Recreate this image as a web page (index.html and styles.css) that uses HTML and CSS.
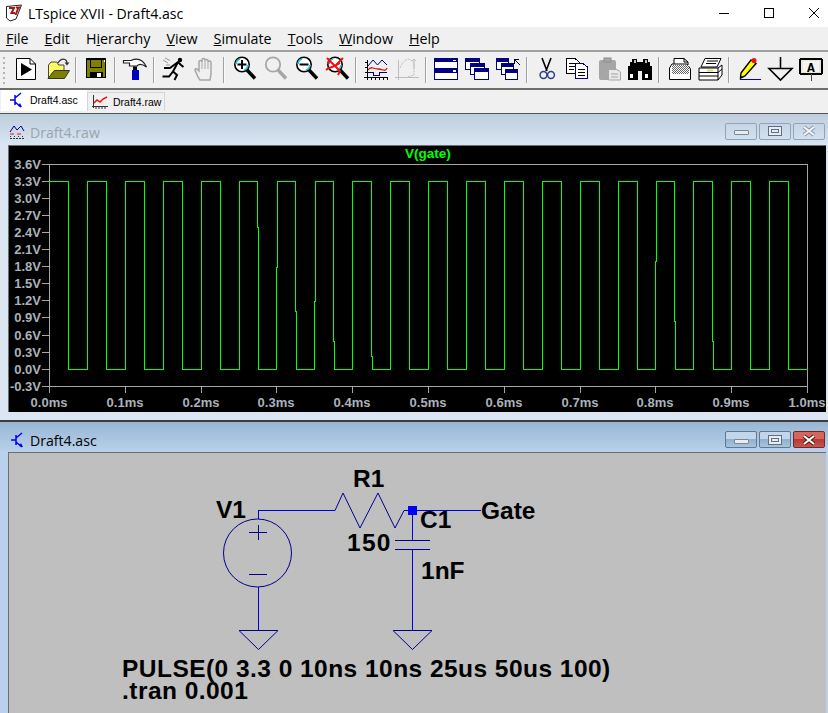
FILE: index.html
```html
<!DOCTYPE html>
<html lang="en">
<head>
<meta charset="utf-8">
<title>LTspice XVII - Draft4.asc</title>
<link rel="stylesheet" href="styles.css">
</head>
<body>
<div class="app">
  <header class="titlebar">
    <svg class="logo" width="18" height="18" viewBox="0 0 18 18"><path d="M1.5 2.5 L16.5 1 L11 15 L5 17 L1.5 14Z" fill="#fff" stroke="#222"/><path d="M4 4 H9 L6.5 9 H10 M11 3.5 H16 M13.5 3.5 L10.5 11" fill="none" stroke="#a01818" stroke-width="2"/></svg>
    <span class="app-title">LTspice XVII - Draft4.asc</span>
    <div class="caption">
      <svg width="12" height="12" viewBox="0 0 12 12"><path d="M1 6.5H11" stroke="#000"/></svg>
      <svg width="12" height="12" viewBox="0 0 12 12"><rect x="1.5" y="1.5" width="9" height="9" fill="none" stroke="#000"/></svg>
      <svg width="12" height="12" viewBox="0 0 12 12"><path d="M1 1L11 11M11 1L1 11" stroke="#000" fill="none"/></svg>
    </div>
  </header>
  <nav class="menubar">
    <span><u>F</u>ile</span><span><u>E</u>dit</span><span>H<u>i</u>erarchy</span><span><u>V</u>iew</span><span><u>S</u>imulate</span><span><u>T</u>ools</span><span><u>W</u>indow</span><span><u>H</u>elp</span>
  </nav>
  <div class="toolbar">
    <div class="grip"></div>
    <div class="group">
      <svg class="ic" viewBox="0 0 24 24"><path d="M2.5 1.5H16L21.5 7V22.5H2.5Z" fill="#fff" stroke="#000"/><path d="M16 1.5V7H21.5" fill="none" stroke="#000"/><path d="M7 6V19L18 12.5Z" fill="#000"/></svg>
      <svg class="ic" viewBox="0 0 24 24"><defs><pattern id="dith" width="2" height="2" patternUnits="userSpaceOnUse"><rect width="2" height="2" fill="#ffff00"/><rect width="1" height="1" fill="#ffffc0"/><rect x="1" y="1" width="1" height="1" fill="#ffffc0"/></pattern></defs><path d="M3.5 21V8L6 5H12L13.5 8H19V14H9Z" fill="url(#dith)" stroke="#444"/><path d="M3 21.5L9.500 13.500H24.5L19.5 21.5Z" fill="#808000" stroke="#333"/><path d="M13 6Q16 1 20 2.5Q22 3.5 22 6" fill="none" stroke="#333" stroke-width="1.3"/><path d="M19.5 5.5H24.5L22 8.5Z" fill="#333"/></svg>
    </div>
    <div class="sep"></div>
    <div class="group">
      <svg class="ic crisp" viewBox="0 0 24 24"><rect x="2.5" y="1.5" width="19" height="19" fill="#808000" stroke="#000"/><rect x="3" y="2" width="18" height="1" fill="#000"/><rect x="6.5" y="2.5" width="11" height="8" fill="#808000" stroke="#000"/><rect x="20" y="3" width="1" height="2" fill="#fff"/><rect x="6" y="15" width="13" height="6" fill="#000"/><rect x="13" y="16" width="4" height="4" fill="#fff"/></svg>
    </div>
    <div class="sep"></div>
    <div class="group">
      <svg class="ic" viewBox="0 0 24 24"><path d="M0.5 3.500H8Q18 -1 23.500 10Q17 5.500 14 9H6.500V6H0.500Z" fill="#fff" stroke="#222" stroke-width="1.200"/><rect x="10" y="9.500" width="4" height="4" fill="#000"/><rect x="9" y="13" width="7" height="10" fill="#0000c0"/></svg>
    </div>
    <div class="sep"></div>
    <div class="group">
      <svg class="ic" viewBox="0 0 24 24"><path d="M1 3L6 6M3 1L8 3.5M4 8L8 8" stroke="#999" fill="none"/><circle cx="18" cy="3" r="2.2" fill="#000"/><path d="M2 11H8L16 5L19 8L21.5 10M15.5 6L11 14.5L15 18L12.5 23M11 14.5L7 19.5H0.5" fill="none" stroke="#000" stroke-width="2"/></svg>
      <svg class="ic" viewBox="0 0 24 24"><path d="M5 20L2 13Q2 11 4 12L6 14V5Q6 3.5 7.500 3.500Q9 3.500 9 5V3Q9 1.500 10.500 1.500Q12 1.500 12 3V3.500Q12 2.500 13.500 2.500Q15 2.500 15 4V5Q15 4 16.500 4Q18 4 18 5.500V17L17 23H7Z" fill="#f0f0f0" stroke="#a6a6a6" stroke-width="1.5"/><path d="M9 5V12M12 3V12M15 5V12" stroke="#a6a6a6" fill="none"/></svg>
    </div>
    <div class="sep"></div>
    <div class="group">
      <svg class="ic" viewBox="0 0 24 24"><path d="M15 13L23 21.500" stroke="#000" stroke-width="3.400"/><circle cx="10" cy="7.500" r="7.200" fill="#fff" stroke="#000" stroke-width="1.600"/><path d="M4 7Q4.500 3 8 2M16 8Q15.500 12 12 13" fill="none" stroke="#20c8d8" stroke-width="1.800"/><path d="M10 3V12M5.500 7.500H14.500" stroke="#000" stroke-width="2"/></svg>
      <svg class="ic" viewBox="0 0 24 24"><path d="M15 13L23 21.500" stroke="#a6a6a6" stroke-width="3.400"/><circle cx="10" cy="7.500" r="7.200" fill="#f0f0f0" stroke="#a6a6a6" stroke-width="1.800"/></svg>
      <svg class="ic" viewBox="0 0 24 24"><path d="M15 13L23 21.500" stroke="#000" stroke-width="3.400"/><circle cx="10" cy="7.500" r="7.200" fill="#fff" stroke="#000" stroke-width="1.600"/><path d="M4 7Q4.500 3 8 2M16 8Q15.500 12 12 13" fill="none" stroke="#20c8d8" stroke-width="1.800"/><path d="M5.500 7.500H14.500" stroke="#000" stroke-width="2"/></svg>
      <svg class="ic" viewBox="0 0 24 24"><path d="M15 13L23 21.500" stroke="#000" stroke-width="3.400"/><circle cx="10" cy="7.500" r="7.200" fill="#fff" stroke="#000" stroke-width="1.600"/><path d="M4 7Q4.500 3 8 2M16 8Q15.500 12 12 13" fill="none" stroke="#20c8d8" stroke-width="1.800"/><path d="M2 1L15 14L13 18M18 1L10 9L4 11L1 13M4 3L3 7M10 9L15 6" fill="none" stroke="#f01010" stroke-width="2"/></svg>
    </div>
    <div class="sep"></div>
    <div class="group">
      <svg class="ic crisp" viewBox="0 0 24 24"><path d="M3.500 3V23M0 20.500H24M7 21V23M11 21V23M15 21V23M19 21V23M23 21V23M1 5.500H3M1 10.500H3M1 15.500H3" stroke="#000" fill="none"/><g class="soft"><path d="M4 9L9 3L13.500 8L18 3L23 8" stroke="#000080" fill="none"/><path d="M4 13Q6 10 9 11T14 12T19 13T23 11" stroke="#e01010" fill="none" stroke-width="1.300"/></g><path d="M4 15.500H9V18.500H15V15.500H23" stroke="#000080" fill="none"/></svg>
      <svg class="ic" viewBox="0 0 24 24"><path d="M3.500 3V23M0 20.500H24" stroke="#bdbdbd" fill="none"/><path d="M5 11Q8 3 14 2L19 6V18L13 20" stroke="#bdbdbd" stroke-dasharray="2 1" fill="none"/><path d="M19 2V12M17 4L19 2L21 4" stroke="#bdbdbd" fill="none"/></svg>
    </div>
    <div class="sep"></div>
    <div class="group">
      <svg class="ic crisp" viewBox="0 0 24 24"><rect x="0.500" y="1.500" width="23" height="10" fill="#fff" stroke="#000080"/><rect x="1" y="2" width="22" height="3" fill="#000080"/><rect x="19" y="3" width="3" height="1" fill="#fff"/><rect x="0.500" y="12.500" width="23" height="10" fill="#fff" stroke="#000080"/><rect x="1" y="12" width="22" height="4" fill="#000080"/><rect x="19" y="13" width="3" height="2" fill="#fff"/></svg>
      <svg class="ic crisp" viewBox="0 0 24 24"><rect x="0.500" y="1.500" width="14" height="11" fill="#fff" stroke="#000080"/><rect x="1" y="2" width="13" height="3" fill="#000080"/><rect x="5.500" y="6.500" width="14" height="11" fill="#fff" stroke="#000080"/><rect x="6" y="7" width="13" height="3" fill="#000080"/><rect x="9.500" y="11.500" width="14" height="11" fill="#fff" stroke="#000080"/><rect x="10" y="12" width="13" height="3" fill="#000080"/></svg>
      <svg class="ic crisp" viewBox="0 0 24 24"><rect x="0.500" y="1.500" width="12" height="11" fill="#fff" stroke="#000080"/><rect x="1" y="2" width="11" height="3" fill="#000080"/><rect x="5.500" y="6.500" width="12" height="11" fill="#fff" stroke="#000080"/><rect x="6" y="7" width="11" height="3" fill="#000080"/><rect x="9.500" y="12.500" width="12" height="10" fill="#fff" stroke="#000080"/><rect x="10" y="13" width="11" height="3" fill="#000080"/><path d="M19 2.500H23M18.500 2V7M19 3L24 8" stroke="#000" fill="none"/></svg>
    </div>
    <div class="sep"></div>
    <div class="group">
      <svg class="ic" viewBox="0 0 24 24"><path d="M7 1L12 14M16 1L11 14" stroke="#000" stroke-width="1.600" fill="none"/><circle cx="8.500" cy="18" r="3.400" fill="none" stroke="#2c3e90" stroke-width="1.500"/><circle cx="16" cy="18" r="3.400" fill="none" stroke="#2c3e90" stroke-width="1.500"/></svg>
      <svg class="ic crisp" viewBox="0 0 24 24"><path d="M0.500 1.500H9L13 5V16H0.500Z" fill="#fff" stroke="#000"/><path d="M3 6H9M3 9H10M3 12H8" stroke="#000"/><path d="M9.500 6.500H17L21.500 10V21.500H9.500Z" fill="#fff" stroke="#000080"/><path d="M12 12H19M12 15H19M12 18H19" stroke="#000"/></svg>
      <svg class="ic" viewBox="0 0 24 24"><rect x="2" y="3" width="17" height="20" rx="2" fill="#a6a6a6"/><rect x="7" y="1" width="7" height="4" fill="#a6a6a6" stroke="#8c8c8c"/><path d="M11.500 12.500H20L23.500 15V23H11.500Z" fill="#e8e8e8" stroke="#a6a6a6"/><path d="M14 17H21M14 20H21" stroke="#a6a6a6"/></svg>
      <svg class="ic crisp" viewBox="0 0 24 24"><path d="M4 2H9V5H15V2H20V5H22V9H24V23H14V14H10V23H0V9H2V5H4Z" fill="#000"/><rect x="2" y="17" width="3" height="4" fill="#fff"/><rect x="17" y="17" width="3" height="4" fill="#fff"/><rect x="6" y="3" width="2" height="3" fill="#bbb"/><rect x="17" y="3" width="2" height="3" fill="#bbb"/></svg>
    </div>
    <div class="sep"></div>
    <div class="group">
      <svg class="ic" viewBox="0 0 24 24"><defs><pattern id="dith2" width="2" height="2" patternUnits="userSpaceOnUse"><rect width="2" height="2" fill="#fff"/><rect width="1" height="1" fill="#666"/><rect x="1" y="1" width="1" height="1" fill="#666"/></pattern></defs><path d="M7 1.500H17L21 5V9H7Z" fill="#fff" stroke="#000"/><path d="M5 7H20L23.500 12V22.500H2.500V11Z" fill="#fff" stroke="#000"/><rect x="5" y="8" width="17" height="9" fill="url(#dith2)"/><path d="M17 1.500V5H21" fill="none" stroke="#000"/></svg>
      <svg class="ic" viewBox="0 0 24 24"><path d="M7 1.500H23L19 10H3Z" fill="#fff" stroke="#000"/><path d="M9 4H20M8 6.500H18" stroke="#000"/><path d="M1 11H20L24 8V18L20 23H1Z" fill="#fff" stroke="#000"/><path d="M1 15.500H20M1 19H20M20 11V23M20 15.500L24 12" stroke="#000" fill="none"/><rect x="9" y="12.500" width="6" height="2" fill="#e4e060"/></svg>
    </div>
    <div class="sep"></div>
    <div class="group">
      <svg class="ic" viewBox="0 0 24 24"><path d="M4 16L14 3L19 6.500L8 19L3.500 21Z" fill="#ffff00" stroke="#000" stroke-width="1.400"/><circle cx="17" cy="3.500" r="2.500" fill="#f01010"/><path d="M3 19L3.500 21L6 20Z" fill="#000"/><path d="M3 22.500H24" stroke="#0000c0" stroke-width="1"/></svg>
      <svg class="ic" viewBox="0 0 24 24"><path d="M12.500 0V11M1 11.500H24L12.500 23Z" fill="none" stroke="#000" stroke-width="1.600"/></svg>
      <svg class="ic crisp" viewBox="0 0 24 24"><rect x="1" y="2" width="22" height="15" rx="2" fill="#e8e8d8" stroke="#000" stroke-width="2"/><rect x="4" y="4" width="16" height="11" fill="#f4f4f4"/><text x="12" y="14.500" class="glyph-a">A</text><path d="M12.500 17V24" stroke="#444"/></svg>
    </div>
  </div>
  <div class="tabs">
    <div class="tab active">
      <svg width="14" height="16" viewBox="0 0 14 16"><path d="M0 8H5M5 3V13M5 6L11 1M5 10L11 15" fill="none" stroke="#0000f0" stroke-width="1.500"/><path d="M12 15L8 14L10 11Z" fill="#0000f0"/></svg>
      <span>Draft4.asc</span>
    </div>
    <div class="tab">
      <svg width="16" height="16" viewBox="0 0 16 16"><path d="M1.500 1V14M0 12.500H16M4 13V15M7 13V15M10 13V15M13 13V15" stroke="#333" fill="none"/><path d="M2 9L5 6L8 8L11 5L15 3" stroke="#f01010" stroke-width="1.500" fill="none"/></svg>
      <span>Draft4.raw</span>
    </div>
  </div>
  <section class="win inactive">
    <div class="win-title first">
      <svg class="win-ic" width="16" height="16" viewBox="0 0 16 16"><path d="M1 8L5 2L8 6L12 2L15 7" fill="none" stroke="#000080"/><path d="M1 10H5M8 10H12" stroke="#f01010"/><path d="M1 14.500H15" stroke="#333" stroke-dasharray="2 1"/><path d="M1 12.500H15" stroke="#333" stroke-dasharray="1 3"/></svg>
      <span class="win-name">Draft4.raw</span>
      <div class="win-btns">
        <button class="wb"><i class="g-min"></i></button>
        <button class="wb"><i class="g-max"></i></button>
        <button class="wb"><svg width="16" height="12" viewBox="0 0 16 12"><path d="M3 2L13 10M13 2L3 10" stroke="#8a97a6" stroke-width="4"/><path d="M3 2L13 10M13 2L3 10" stroke="#f4f6f8" stroke-width="2"/></svg></button>
      </div>
    </div>
    <div class="win-body plot-body">
      <svg class="canvas" width="817" height="266" viewBox="9 145 817 266">
        <rect x="9" y="145" width="817" height="266" fill="#000"/>
        <path class="axis" d="M49.500 163.500H807.500V385.500H49.500Z M42 163.500H49M42 180.500H49M42 197.500H49M42 214.500H49M42 231.500H49M42 248.500H49M42 265.500H49M42 282.500H49M42 299.500H49M42 316.500H49M42 334.500H49M42 351.500H49M42 368.500H49M42 385.500H49 M49.500 385V392M125.500 385V392M201.500 385V392M276.500 385V392M352.500 385V392M428.500 385V392M504.500 385V392M580.500 385V392M655.500 385V392M731.500 385V392M807.500 385V392"/>
        <path class="trace" d="M49.500 184V180.500H68.500V368.500H87.500V180.500H106.500V368.500H125.500V180.500H144.500V368.500H163.500V180.500H182.500V368.500H201.500V180.500H220.500V368.500H239.500V180.500H257.500V226H258.500V368.500H276.500V266H277.500V180.500H295.500V310H296.500V368.500H314.500V300H315.500V180.500H333.500V340H334.500V368.500H352.500V180.500H371.500V355H372.500V368.500H390.500V180.500H409.500V368.500H428.500V180.500H447.500V368.500H466.500V180.500H485.500V368.500H504.500V180.500H523.500V368.500H542.500V180.500H561.500V368.500H580.500V180.500H599.500V368.500H618.500V180.500H637.500V368.500H655.500V260H656.500V180.500H674.500V320H675.500V368.500H693.500V180.500H712.500V340H713.500V368.500H731.500V180.500H750.500V368.500H769.500V180.500H788.500V368.500H807.500"/>
        <text class="trace-name" x="428" y="157">V(gate)</text>
        <g class="ylab">
          <text x="41" y="168">3.6V</text><text x="41" y="185">3.3V</text><text x="41" y="202">3.0V</text><text x="41" y="219">2.7V</text><text x="41" y="236">2.4V</text><text x="41" y="253">2.1V</text><text x="41" y="270">1.8V</text><text x="41" y="287">1.5V</text><text x="41" y="304">1.2V</text><text x="41" y="321">0.9V</text><text x="41" y="339">0.6V</text><text x="41" y="356">0.3V</text><text x="41" y="373">0.0V</text><text x="41" y="390">-0.3V</text>
        </g>
        <g class="xlab">
          <text x="49" y="406">0.0ms</text><text x="125" y="406">0.1ms</text><text x="201" y="406">0.2ms</text><text x="276" y="406">0.3ms</text><text x="352" y="406">0.4ms</text><text x="428" y="406">0.5ms</text><text x="504" y="406">0.6ms</text><text x="580" y="406">0.7ms</text><text x="655" y="406">0.8ms</text><text x="731" y="406">0.9ms</text><text x="807" y="406">1.0ms</text>
        </g>
      </svg>
    </div>
    <div class="win-bottom"></div>
  </section>
  <section class="win active">
    <div class="win-title">
      <svg class="win-ic" width="14" height="16" viewBox="0 0 14 16"><path d="M0 8H5M5 3V13M5 6L11 1M5 10L11 15" fill="none" stroke="#0000f0" stroke-width="1.500"/><path d="M12 15L8 14L10 11Z" fill="#0000f0"/></svg>
      <span class="win-name">Draft4.asc</span>
      <div class="win-btns">
        <button class="wb"><i class="g-min"></i></button>
        <button class="wb"><i class="g-max"></i></button>
        <button class="wb close"><svg width="16" height="12" viewBox="0 0 16 12"><path d="M3 2L13 10M13 2L3 10" stroke="#4a1a1a" stroke-width="4"/><path d="M3 2L13 10M13 2L3 10" stroke="#fff" stroke-width="2"/></svg></button>
      </div>
    </div>
    <div class="win-body sch-body">
      <svg class="canvas" width="817" height="260" viewBox="9 453 817 260">
        <path class="wire" d="M258.500 519V510.500H335M404 510.500H481M412.500 510.500V540M412.500 549V630M258.500 587V630"/>
        <path class="sym" d="M335 510.500L343 493L360 528L378 493L395 528L404 510.500"/>
        <path class="sym" d="M395 540.500H430M395 549.500H430M249 532.500H267M258.500 525V540M249 574.500H267"/>
        <circle class="sym" cx="257.500" cy="553" r="34"/>
        <path class="sym" d="M239 630.500H278L258.500 649.500Z M393 630.500H432L412.500 649.500Z"/>
        <rect class="node" x="408" y="506" width="9" height="9"/>
        <g class="sch-text">
          <text x="216" y="518">V1</text>
          <text x="353" y="487">R1</text>
          <text x="420" y="528">C1</text>
          <text class="value" x="347" y="551">150</text>
          <text x="421" y="579">1nF</text>
          <text x="481" y="519">Gate</text>
          <text class="spice" x="122" y="677">PULSE(0 3.3 0 10ns 10ns 25us 50us 100)</text>
          <text class="spice" x="122" y="699">.tran 0.001</text>
        </g>
      </svg>
    </div>
  </section>
</div>
</body>
</html>
```

FILE: styles.css
```css
* { box-sizing: border-box; }
html, body { margin: 0; padding: 0; }
body { width: 828px; height: 713px; overflow: hidden; background: #f0f0f0; font-family: "Open Sans", "Liberation Sans", sans-serif; }
.app { display: flex; flex-direction: column; height: 713px; }

.titlebar { height: 27px; background: #fff; display: flex; align-items: center; padding-left: 5px; }
.logo { margin-right: 5px; }
.app-title { font-size: 14.1px; color: #000; }
.caption { margin-left: auto; display: flex; gap: 33px; padding-right: 8px; }
.caption svg { display: block; }

.menubar { height: 23px; background: #f0f0f0; display: flex; align-items: center; gap: 16px; padding-left: 6px; font-size: 14.280px; color: #000; }

.toolbar { height: 40px; border-top: 2px solid #a0a0a0; border-bottom: 2px solid #6e6e6e; background: #f0f0f0; display: flex; align-items: flex-start; padding: 5px 0 0 14px; position: relative; }
.grip { position: absolute; left: 3px; top: 5px; width: 2px; height: 27px; background: repeating-linear-gradient(#b4b4b4 0 2px, transparent 2px 5px); }
.group { display: flex; gap: 7px; }
.sep { width: 2px; height: 26px; margin: 0 7px 0 6px; border-left: 1px solid #a0a0a0; border-right: 1px solid #fafafa; }
.ic { display: block; width: 24px; height: 24px; overflow: visible; }
.crisp { shape-rendering: crispEdges; }
.soft { shape-rendering: auto; }
.glyph-a { font: bold 13px "Liberation Mono", monospace; text-anchor: middle; fill: #000; }

.tabs { height: 24px; background: #f0f0f0; border-bottom: 1px solid #555; display: flex; align-items: flex-end; padding: 0 0 2px 1px; }
.tab { height: 19px; width: 78px; display: flex; align-items: center; gap: 5px; padding-left: 4px; border: 1px solid #d6d6d6; border-bottom: 0; font-family: "Liberation Sans", sans-serif; font-size: 10.500px; color: #000; }
.tab svg { flex: none; }
.tab.active { height: 21px; width: 86px; background: #fff; border: 0; gap: 6px; padding-left: 9px; }

.win { display: flex; flex-direction: column; }
.win.inactive { height: 309px; background: #dbe6f2; }
.win.active { height: 291px; background: #b9d1ea; flex: none; }
.win-title { height: 30px; flex: none; display: flex; align-items: flex-end; padding: 0 3px 4px 8px; }
.win-title.first { height: 31px; padding-bottom: 5px; }
.inactive .win-title { background: linear-gradient(#bdcede, #d9e5f2); }
.active .win-title { background: linear-gradient(#98b6d4, #b9d1ea); }
.win-ic { margin: 0 5px 0 3px; flex: none; }
.inactive .win-ic { margin: 0 5px 0 1px; }
.win-name { line-height: 19px; margin-bottom: -2px; font-size: 14.100px; color: #000; }
.inactive .win-name { color: #9aa3ad; }
.win-btns { margin-left: auto; display: flex; gap: 2px; }
.wb { width: 32px; height: 17px; padding: 0; border: 1px solid #8fa3ba; border-radius: 2px; display: flex; align-items: center; justify-content: center; background: linear-gradient(#c6d6e5, #d3e0ee); }
.active .wb { border-color: #5f7891; background: linear-gradient(#c3d5e8 0 45%, #8fb0d0 50%, #a8c4de); }
.active .wb.close { border-color: #6e2a2a; background: linear-gradient(#d6665c 0 45%, #b83a34 50%, #c8554e); }
.g-min { display: block; width: 15px; height: 5px; margin-top: 3px; background: #e8ecf0; border: 1px solid #78879a; border-radius: 1px; }
.g-max { display: block; width: 14px; height: 10px; background: #e8ecf0; border: 1px solid #5f6f82; box-shadow: inset 0 0 0 2px #e8ecf0, inset 0 0 0 3px #5f6f82; }

.win-body { margin: 0 2px 0 8px; border-top: 1px solid #6a6f75; border-left: 1px solid #6a6f75; }
.canvas { display: block; }
.plot-body { flex: none; }
.win-bottom { margin-top: auto; height: 2px; background: #3c3c3c; }
.sch-body { flex: 1; background: #bfbfbf; }

.axis { fill: none; stroke: #a6a6a6; shape-rendering: crispEdges; }
.trace { fill: none; stroke: #00ff00; shape-rendering: crispEdges; }
.trace-name { font: bold 13.500px "Liberation Sans", sans-serif; fill: #00ff00; text-anchor: middle; }
.ylab, .xlab { font: bold 13px "Liberation Sans", sans-serif; fill: #aab2ba; }
.ylab { text-anchor: end; }
.xlab { text-anchor: middle; }

.wire { fill: none; stroke: #0000e6; shape-rendering: crispEdges; }
.sym { fill: none; stroke: #000090; }
.node { fill: #0000ff; }
.sch-text { font: bold 24.500px "Liberation Sans", sans-serif; fill: #000; }
.sch-text .spice { letter-spacing: 0.460px; }
.sch-text .value { letter-spacing: 1.300px; }
```
